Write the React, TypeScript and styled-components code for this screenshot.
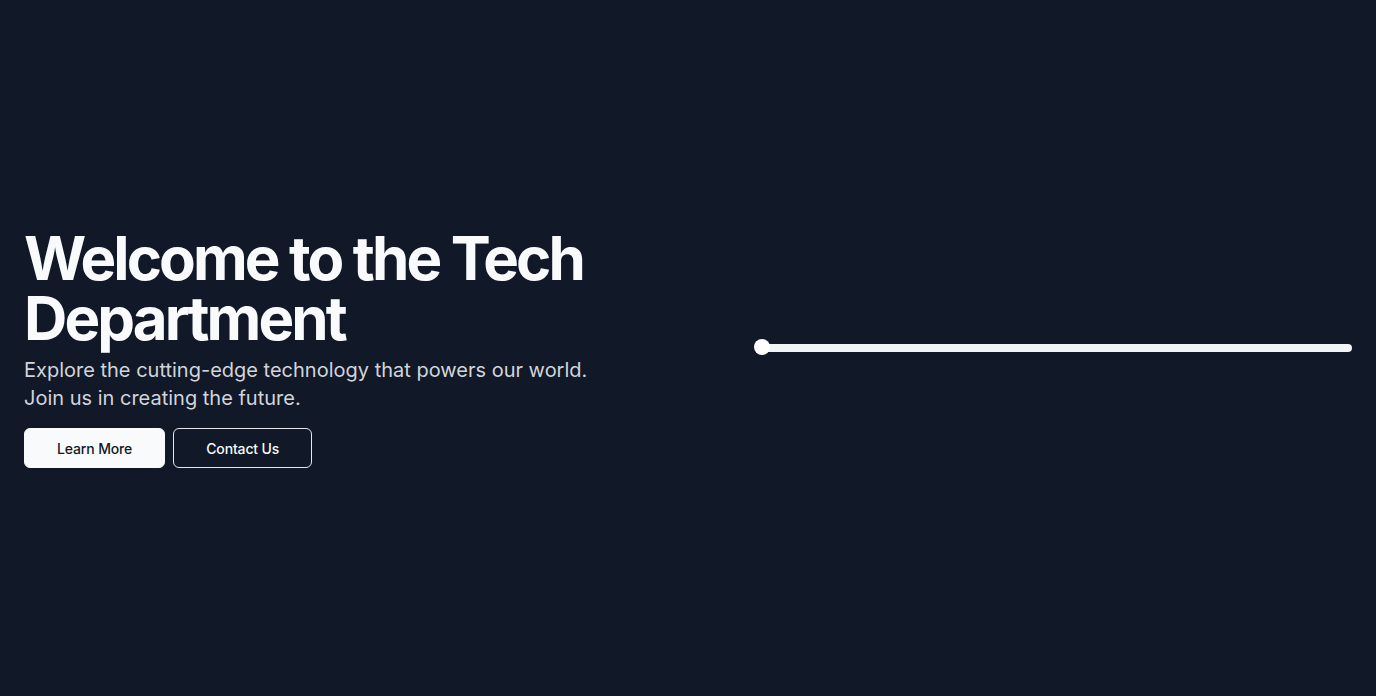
import React from "react";
import styled, { createGlobalStyle } from "styled-components";

const Global = createGlobalStyle`
  html, body { margin: 0; padding: 0; background: #111827; }
  body { font-family: Inter, "Noto Sans", sans-serif; -webkit-font-smoothing: antialiased; }
  * { box-sizing: border-box; }
`;

const Page = styled.main`
  min-height: 696px;
  display: grid;
  grid-template-columns: 1fr 1fr;
  column-gap: 128px;
  align-items: center;
  padding: 0 24px;
  background: #111827;
`;

const Intro = styled.section`
  display: flex;
  flex-direction: column;
`;

const Title = styled.h1`
  margin: 0;
  font-size: 60px;
  line-height: 60px;
  font-weight: 700;
  letter-spacing: -0.048em;
  color: #f9fafb;
`;

const Lead = styled.p`
  margin: 8px 0 0;
  font-size: 20px;
  line-height: 28px;
  color: #d1d5db;
`;

const Actions = styled.div`
  display: flex;
  gap: 8px;
  margin-top: 16px;
`;

const Button = styled.button<{ $variant: "solid" | "outline" }>`
  height: 40px;
  padding: 0 32px;
  border-radius: 6px;
  font-family: Inter, sans-serif;
  font-size: 14px;
  font-weight: 500;
  letter-spacing: -0.01em;
  cursor: pointer;
  border: 1px solid ${(p) => (p.$variant === "solid" ? "#f9fafb" : "#e5e7eb")};
  background: ${(p) => (p.$variant === "solid" ? "#f9fafb" : "#111827")};
  color: ${(p) => (p.$variant === "solid" ? "#111827" : "#f9fafb")};
`;

const Slider = styled.div`
  position: relative;
  height: 16px;
  display: flex;
  align-items: center;
`;

const Track = styled.div`
  flex: 1;
  margin-left: 8px;
  height: 8px;
  border-radius: 4px;
  background: #f3f4f6;
`;

const Thumb = styled.div`
  position: absolute;
  left: 2px;
  top: -1px;
  width: 16px;
  height: 16px;
  border-radius: 50%;
  background: #ffffff;
`;

export default function App() {
  return (
    <>
      <Global />
      <Page>
        <Intro>
          <Title>Welcome to the Tech Department</Title>
          <Lead>
            Explore the cutting-edge technology that powers our world. Join us in creating the future.
          </Lead>
          <Actions>
            <Button $variant="solid">Learn More</Button>
            <Button $variant="outline">Contact Us</Button>
          </Actions>
        </Intro>
        <Slider>
          <Track />
          <Thumb />
        </Slider>
      </Page>
    </>
  );
}
